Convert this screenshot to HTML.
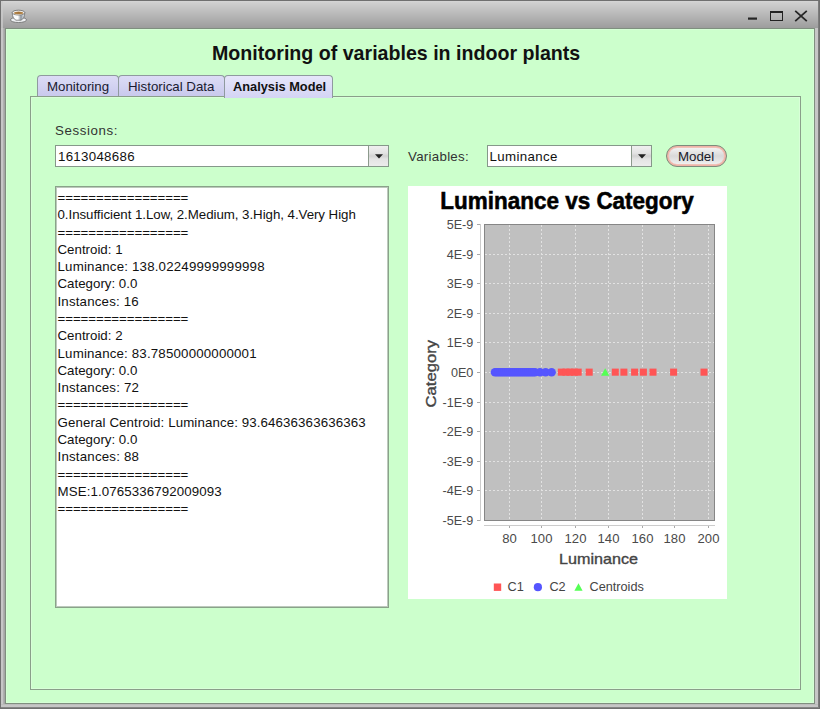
<!DOCTYPE html>
<html><head><meta charset="utf-8">
<style>
*{box-sizing:border-box;margin:0;padding:0}
html,body{width:820px;height:709px;overflow:hidden;background:#707070;font-family:"Liberation Sans",sans-serif;}
.a{position:absolute}
.lbl{font-size:13.3px;color:#333;white-space:nowrap}
.tab{height:22px;border:1px solid #8f9a9f;border-bottom:none;border-radius:4px 4px 0 0;background:linear-gradient(#dcdcf6,#c8c8ec);font-size:13.3px;color:#1a1a30;white-space:nowrap}
.combo{background:#fff;border:1px solid #86988a;font-size:13.3px;color:#111;white-space:nowrap}
.arrow{background:linear-gradient(#efefef,#e4e4e4 35%,#d2d2d2 50%,#e4e4e4 65%,#ececec);border-left:1px solid #8c9a8c}
#ta{left:55px;top:186px;width:334px;height:422px;background:#fff;border:1px solid #8aa28a;box-shadow:inset 1px 1px 0 #bccabc, inset -1px -1px 0 #bccabc;font-size:13.3px;line-height:17.28px;color:#111;white-space:pre}
</style></head><body>
<!-- frame -->
<div class="a" style="left:1px;top:1px;width:817px;height:706px;background:#c6c6c6"></div>
<div class="a" style="left:818px;top:1px;width:1px;height:707px;background:#7c7c7c"></div>
<div class="a" style="left:1px;top:707px;width:818px;height:1px;background:#858585"></div>
<div class="a" style="left:3px;top:1px;width:815px;height:27px;background:linear-gradient(#d6d6d6 0px,#cfcfcf 2px,#9d9d9d 27px)"></div>
<div class="a" style="left:1px;top:1px;width:2px;height:27px;background:linear-gradient(#cccccc,#c0c0c0)"></div>
<div class="a" style="left:3px;top:28px;width:1px;height:676px;background:#b0b0b0"></div>
<div class="a" style="left:4px;top:28px;width:1px;height:676px;background:#a5a5a5"></div>
<div class="a" style="left:1px;top:704px;width:817px;height:1px;background:#bcbcbc"></div>
<div class="a" style="left:5px;top:28px;width:810px;height:676px;border:1px solid #7f8f7f;background:#ccffcc"></div>
<div class="a" style="left:6px;top:29px;width:808px;height:674px;border:1px solid #d6ffd6"></div>
<!-- title bar icons -->
<svg class="a" style="left:0;top:0" width="30" height="28" viewBox="0 0 30 28">
  <defs>
    <radialGradient id="cof" cx="0.5" cy="0.45" r="0.6"><stop offset="0" stop-color="#9a6a30"/><stop offset="0.7" stop-color="#b88a50"/><stop offset="1" stop-color="#e8d8c0"/></radialGradient>
    <linearGradient id="cupg" x1="0" x2="1"><stop offset="0" stop-color="#f4f6f8"/><stop offset="0.45" stop-color="#ffffff"/><stop offset="0.7" stop-color="#8a939c"/><stop offset="0.85" stop-color="#c8ced4"/><stop offset="1" stop-color="#e8ecf0"/></linearGradient>
  </defs>
  <ellipse cx="18.5" cy="19.9" rx="8.1" ry="2.6" fill="#eef0f3" stroke="#6c6c6c" stroke-width="0.8"/>
  <path d="M12.2 12.6 Q12.4 18.6 16 20.2 L21 20.2 Q24.6 18.6 24.8 12.6Z" fill="url(#cupg)" stroke="#707070" stroke-width="0.8"/>
  <ellipse cx="18.5" cy="12.6" rx="6.3" ry="2.4" fill="#f2f2f2" stroke="#686868" stroke-width="0.8"/>
  <ellipse cx="18.6" cy="13" rx="4.8" ry="1.6" fill="url(#cof)"/>
</svg>
<svg class="a" style="left:740px;top:4px" width="75" height="24" viewBox="740 4 75 24">
  <rect x="748" y="17.5" width="9" height="2.2" fill="#262626"/>
  <rect x="770.5" y="11.5" width="12" height="9" fill="none" stroke="#222" stroke-width="1"/>
  <rect x="770" y="11" width="13" height="2" fill="#222"/>
  <path d="M795.2 10.8L806.8 21.2M806.8 10.8L795.2 21.2" stroke="#262626" stroke-width="1.8"/>
</svg>

<div class="a" style="left:212px;top:41.5px;font-size:19.62px;font-weight:bold;color:#111;white-space:nowrap">Monitoring of variables in indoor plants</div>

<!-- tab panel -->
<div class="tab a" style="left:37px;top:75px;width:82px;height:22px"><span class="a" style="left:9px;top:3px">Monitoring</span></div>
<div class="tab a" style="left:118px;top:75px;width:107px;height:22px"><span class="a" style="left:9px;top:3px">Historical Data</span></div>
<div class="a" style="left:30px;top:96px;width:771px;height:594px;border:1px solid #8a9f8a"></div>
<div class="a" style="left:31px;top:97px;width:769px;height:592px;border:1px solid #d8ffd8"></div>
<div class="tab a" style="left:224px;top:75px;width:109px;height:23px;background:linear-gradient(#e6e6fa,#d4d4f4);border-color:#8f9a9f"><span class="a" style="left:8px;top:3px;font-size:12.8px;font-weight:bold;color:#111">Analysis Model</span></div>

<div class="lbl a" style="left:55px;top:123px;letter-spacing:0.6px">Sessions:</div>
<div class="combo a" style="left:55px;top:145px;width:334px;height:22px">
  <div class="a" style="left:2px;top:3px;letter-spacing:0.29px">1613048686</div>
  <div class="arrow a" style="left:312px;top:0;width:20px;height:20px"><svg class="a" style="left:5.5px;top:8px" width="8" height="5" viewBox="0 0 8 5"><path d="M0 0.3H8L4 4.5Z" fill="#222"/></svg></div>
</div>

<div class="lbl a" style="left:408px;top:149px;letter-spacing:0.28px">Variables:</div>
<div class="combo a" style="left:487px;top:145px;width:165px;height:22px">
  <div class="a" style="left:1.5px;top:3px;letter-spacing:0.37px">Luminance</div>
  <div class="arrow a" style="left:143px;top:0;width:20px;height:20px"><svg class="a" style="left:5.5px;top:8px" width="8" height="5" viewBox="0 0 8 5"><path d="M0 0.3H8L4 4.5Z" fill="#222"/></svg></div>
</div>
<div class="a" style="left:666px;top:145px;width:61px;height:22px;border:1px solid #7c8c7c;border-radius:11px;background:#efb4a8;padding:2px">
  <div style="width:100%;height:100%;border-radius:9px;background:linear-gradient(#f2f2f2,#d9d9d9 50%,#efefef);box-shadow:0 0 0 0.5px #f4d0c8"></div>
  <span class="a" style="left:11px;top:3px;font-size:13.3px;color:#1a1a2a">Model</span>
</div>

<div id="ta" class="a"><div class="a" style="left:1.5px;top:2px"><div style="letter-spacing:-0.07px">=================</div><div style="letter-spacing:-0.045px">0.Insufficient 1.Low, 2.Medium, 3.High, 4.Very High</div><div style="letter-spacing:-0.07px">=================</div><div>Centroid: 1</div><div style="letter-spacing:0.186px">Luminance: 138.02249999999998</div><div>Category: 0.0</div><div style="letter-spacing:0.17px">Instances: 16</div><div style="letter-spacing:-0.07px">=================</div><div>Centroid: 2</div><div style="letter-spacing:0.17px">Luminance: 83.78500000000001</div><div>Category: 0.0</div><div style="letter-spacing:0.2px">Instances: 72</div><div style="letter-spacing:-0.07px">=================</div><div style="letter-spacing:0.11px">General Centroid: Luminance: 93.64636363636363</div><div>Category: 0.0</div><div style="letter-spacing:0.2px">Instances: 88</div><div style="letter-spacing:-0.07px">=================</div><div style="letter-spacing:0.11px">MSE:1.0765336792009093</div><div style="letter-spacing:-0.07px">=================</div></div></div>

<svg class="a" style="left:408px;top:186px" width="319" height="413" viewBox="408 186 319 413">
<rect x="408" y="186" width="319" height="413" fill="#fff"/>
<text x="440.3" y="208.6" textLength="253.5" lengthAdjust="spacingAndGlyphs" font-family="Liberation Sans" font-weight="bold" font-size="23.6" stroke="#000" stroke-width="0.55" fill="#000">Luminance vs Category</text>
<rect x="484" y="224" width="231" height="297" fill="#c0c0c0"/>
<path d="M509.5 225V520 M541.5 225V520 M575.5 225V520 M608.5 225V520 M642.5 225V520 M674.5 225V520 M708.5 225V520 M485 254.5H714 M485 283.5H714 M485 313.5H714 M485 342.5H714 M485 372.5H714 M485 402.5H714 M485 431.5H714 M485 461.5H714 M485 490.5H714" stroke="#e2e2e2" stroke-width="1" stroke-dasharray="2 2" fill="none"/>
<rect x="484.5" y="224.5" width="230" height="296" fill="none" stroke="#868686" stroke-width="1"/>
<path d="M480.5 224V521 M484 525.5H715" stroke="#cccccc" stroke-width="1" fill="none"/>
<path d="M477 224.5H480 M477 254.5H480 M477 283.5H480 M477 313.5H480 M477 342.5H480 M477 372.5H480 M477 402.5H480 M477 431.5H480 M477 461.5H480 M477 490.5H480 M477 520.5H480 M509.5 526V528 M541.5 526V528 M575.5 526V528 M608.5 526V528 M642.5 526V528 M674.5 526V528 M708.5 526V528" stroke="#a8a8a8" stroke-width="1" fill="none"/>
<g font-family="Liberation Sans" font-size="12.6" fill="#4a4a4a"><text x="473.3" y="229.0" text-anchor="end">5E-9</text><text x="473.3" y="259.0" text-anchor="end">4E-9</text><text x="473.3" y="288.0" text-anchor="end">3E-9</text><text x="473.3" y="318.0" text-anchor="end">2E-9</text><text x="473.3" y="347.0" text-anchor="end">1E-9</text><text x="473.3" y="377.0" text-anchor="end">0E0</text><text x="473.3" y="407.0" text-anchor="end">-1E-9</text><text x="473.3" y="436.0" text-anchor="end">-2E-9</text><text x="473.3" y="466.0" text-anchor="end">-3E-9</text><text x="473.3" y="495.0" text-anchor="end">-4E-9</text><text x="473.3" y="525.0" text-anchor="end">-5E-9</text><text x="509.5" y="542.9" text-anchor="middle" font-size="13.1">80</text><text x="541.5" y="542.9" text-anchor="middle" font-size="13.1">100</text><text x="575.5" y="542.9" text-anchor="middle" font-size="13.1">120</text><text x="608.5" y="542.9" text-anchor="middle" font-size="13.1">140</text><text x="642.5" y="542.9" text-anchor="middle" font-size="13.1">160</text><text x="674.5" y="542.9" text-anchor="middle" font-size="13.1">180</text><text x="708.5" y="542.9" text-anchor="middle" font-size="13.1">200</text></g>
<text x="559" y="563.5" textLength="79" lengthAdjust="spacingAndGlyphs" font-family="Liberation Sans" font-size="14.6" stroke="#444" stroke-width="0.35" fill="#444">Luminance</text>
<text transform="translate(436.2 407.5) rotate(-90)" textLength="67.5" lengthAdjust="spacingAndGlyphs" font-family="Liberation Sans" font-size="15" stroke="#444" stroke-width="0.35" fill="#444">Category</text>
<g fill="#5555ff"><circle cx="495.0" cy="372.2" r="4.3"/><circle cx="497.0" cy="372.2" r="4.3"/><circle cx="499.0" cy="372.2" r="4.3"/><circle cx="501.0" cy="372.2" r="4.3"/><circle cx="503.0" cy="372.2" r="4.3"/><circle cx="505.0" cy="372.2" r="4.3"/><circle cx="507.0" cy="372.2" r="4.3"/><circle cx="509.0" cy="372.2" r="4.3"/><circle cx="511.0" cy="372.2" r="4.3"/><circle cx="513.0" cy="372.2" r="4.3"/><circle cx="515.0" cy="372.2" r="4.3"/><circle cx="517.0" cy="372.2" r="4.3"/><circle cx="519.0" cy="372.2" r="4.3"/><circle cx="521.0" cy="372.2" r="4.3"/><circle cx="523.0" cy="372.2" r="4.3"/><circle cx="525.0" cy="372.2" r="4.3"/><circle cx="527.0" cy="372.2" r="4.3"/><circle cx="529.0" cy="372.2" r="4.3"/><circle cx="531.0" cy="372.2" r="4.3"/><circle cx="533.0" cy="372.2" r="4.3"/><circle cx="535.0" cy="372.2" r="4.3"/><circle cx="540.0" cy="372.2" r="4.3"/><circle cx="545.6" cy="372.2" r="4.3"/><circle cx="551.6" cy="372.2" r="4.3"/></g>
<path d="M605.2 368.2L609.4 375.8H601Z" fill="#55ff55"/>
<g fill="#ff5555"><rect x="557.8" y="368.6" width="7" height="7.1"/><rect x="562.5" y="368.6" width="7" height="7.1"/><rect x="566.5" y="368.6" width="7" height="7.1"/><rect x="570.8" y="368.6" width="7" height="7.1"/><rect x="574.7" y="368.6" width="7" height="7.1"/><rect x="585.7" y="368.6" width="7" height="7.1"/><rect x="611.8" y="368.6" width="7" height="7.1"/><rect x="620.4" y="368.6" width="7" height="7.1"/><rect x="631.1" y="368.6" width="7" height="7.1"/><rect x="639.9" y="368.6" width="7" height="7.1"/><rect x="649.5" y="368.6" width="7" height="7.1"/><rect x="670.1" y="368.6" width="7" height="7.1"/><rect x="700.5" y="368.6" width="7" height="7.1"/></g>
<rect x="493.8" y="583.5" width="7.4" height="7.4" fill="#ff5555"/>
<circle cx="537.9" cy="587.2" r="4.1" fill="#5555ff"/>
<path d="M578.5 583.2L582.6 590.8H574.4Z" fill="#55ff55"/>
<g font-family="Liberation Sans" font-size="12.7" fill="#444"><text x="507.6" y="591.2">C1</text><text x="549.4" y="591.2">C2</text><text x="589.5" y="591.2">Centroids</text></g>
</svg>
</body></html>
